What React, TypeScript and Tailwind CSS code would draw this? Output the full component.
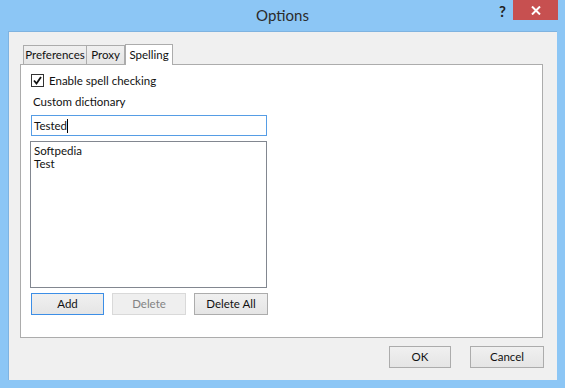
import React from 'react';

const Btn = ({
  label,
  className,
}: {
  label: string;
  className: string;
}) => (
  <div
    className={`h-[22px] flex items-center justify-center border bg-gradient-to-b from-[#f0f0f0] to-[#e5e5e5] text-[11.5px] ${className}`}
  >
    {label}
  </div>
);

export default function App() {
  return (
    <div className="w-[565px] h-[388px] bg-[#8cc6f5] flex flex-col font-['Lato',sans-serif] text-[#111] overflow-hidden">
      {/* Title bar */}
      <div className="h-[31px] relative flex items-center justify-center">
        <div className="text-[15px] text-[#2b2b2b]">Options</div>
        <div className="absolute right-[59px] top-0 h-[22px] flex items-center text-[15px] font-bold text-[#222]">
          ?
        </div>
        <div className="absolute right-[7px] top-0 w-[45px] h-[20px] bg-[#c75050] flex items-center justify-center">
          <svg width="10" height="9" viewBox="0 0 10 9">
            <path d="M1 0.5 L9 8.5 M9 0.5 L1 8.5" stroke="white" strokeWidth="2" />
          </svg>
        </div>
      </div>

      {/* Client area */}
      <div className="mx-[8px] mb-[8px] h-[349px] bg-[#f0f0f0] border-t border-l border-[#7fb3e0] flex flex-col">
        {/* Tabs */}
        <div className="ml-[13px] mt-[11px] h-[21px] flex items-end text-[11.5px]">
          <div className="h-[19px] w-[64px] border border-b-0 border-[#acacac] bg-gradient-to-b from-[#f0f0f0] to-[#e5e5e5] flex items-center justify-center ml-[1px]">
            Preferences
          </div>
          <div className="h-[19px] w-[38px] border border-b-0 border-l-0 border-[#acacac] bg-gradient-to-b from-[#f0f0f0] to-[#e5e5e5] flex items-center justify-center">
            Proxy
          </div>
          <div className="h-[21px] w-[48px] border border-b-0 border-[#acacac] bg-white flex items-start justify-center pt-[1px] relative top-[1px] z-10">
            Spelling
          </div>
        </div>

        {/* Panel */}
        <div className="ml-[11px] w-[523px] h-[274px] border border-[#acacac] bg-white flex flex-col text-[11.5px]">
          <div className="ml-[10px] mt-[9px] flex items-center h-[13px]">
            <div className="w-[13px] h-[13px] border border-[#333] bg-white flex items-center justify-center">
              <svg width="9" height="9" viewBox="0 0 9 9">
                <path d="M1 4.5 L3.5 7.5 L8 1" stroke="#111" strokeWidth="1.8" fill="none" />
              </svg>
            </div>
            <span className="ml-[5px]">Enable spell checking</span>
          </div>

          <div className="ml-[12px] mt-[7px] h-[16px] leading-[16px]">Custom dictionary</div>

          <div className="ml-[10px] mt-[5px] w-[236px] h-[21px] border border-[#569de5] flex items-center pl-[2px]">
            <span>Tested</span>
            <span className="w-[1px] h-[14px] bg-black" />
          </div>

          <div className="ml-[9px] mt-[5px] w-[237px] h-[147px] border border-[#828790] pl-[3px] pt-[2px] leading-[13px]">
            <div className="h-[13px]">Softpedia</div>
            <div className="h-[13px]">Test</div>
          </div>

          <div className="ml-[10px] mt-[5px] flex gap-[8px]">
            <Btn label="Add" className="w-[73px] border-[#3c8ee6]" />
            <Btn
              label="Delete"
              className="w-[74px] border-[#d9d9d9] !bg-none bg-[#efefef] text-[#838383]"
            />
            <Btn label="Delete All" className="w-[74px] border-[#acacac]" />
          </div>
        </div>

        {/* Dialog buttons */}
        <div className="mt-[8px] flex justify-end mr-[13px] gap-[19px]">
          <Btn label="OK" className="w-[62px] border-[#acacac]" />
          <Btn label="Cancel" className="w-[74px] border-[#acacac]" />
        </div>
      </div>
    </div>
  );
}
